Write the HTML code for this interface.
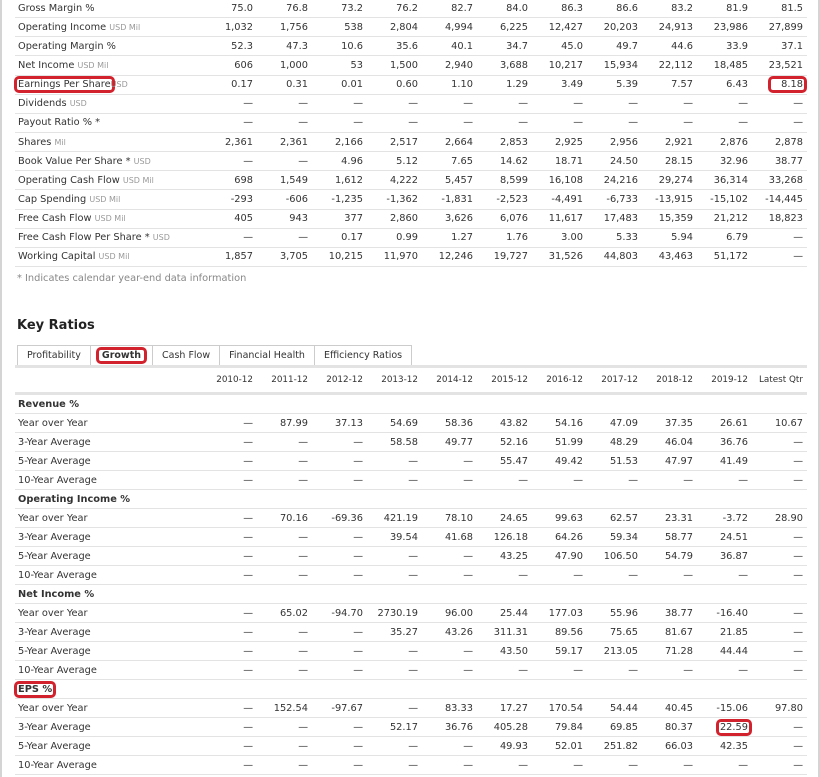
<!DOCTYPE html>
<html><head><meta charset="utf-8"><style>
body{margin:0;width:820px;height:777px;overflow:hidden;background:#fff;font-family:"DejaVu Sans",Verdana,sans-serif;color:#333;position:relative}
.vl{position:absolute;top:0;bottom:0;width:2px;background:#d4d4d4}
table{border-collapse:collapse;position:absolute;left:15px;table-layout:fixed;font-size:9.8px}
td{height:18px;padding:0;border-bottom:1px solid #e3e3e3;text-align:right;padding-right:4px;white-space:nowrap;overflow:visible}
.t1 td{height:18.15px}
td:first-child{text-align:left;padding-left:3px;padding-right:0}
col.l{width:187px}col.n{width:55px}
.u{color:#999;font-size:8px}
.b td:first-child{font-weight:bold}
.hd td{height:24px;border-top:3px solid #e3e3e3;border-bottom:3px solid #e3e3e3;font-size:8.8px}
.red{border:3px solid #d2222d;border-radius:5px;padding:0 1px;margin:-3px -4px}
h2{position:absolute;left:17px;top:318px;margin:0;font-size:13px;font-weight:bold;color:#222}
.tabs{position:absolute;left:17px;top:345px;height:20px;display:flex;font-size:9.5px}
.tabs div{border:1px solid #ccc;border-right:none;height:19px;line-height:19px;padding:0 9px;color:#333}
.tabs div:last-child{border-right:1px solid #ccc}
.fn{position:absolute;left:17px;top:273px;font-size:9.8px;color:#888}
</style></head><body>
<div class="vl" style="left:0"></div><div class="vl" style="left:818px"></div>
<table class="t1" style="top:-1px;width:792px">
<colgroup><col class="l"><col class="n"><col class="n"><col class="n"><col class="n"><col class="n"><col class="n"><col class="n"><col class="n"><col class="n"><col class="n"><col class="n"></colgroup>
<tr><td>Gross Margin %</td><td>75.0</td><td>76.8</td><td>73.2</td><td>76.2</td><td>82.7</td><td>84.0</td><td>86.3</td><td>86.6</td><td>83.2</td><td>81.9</td><td>81.5</td></tr>
<tr><td>Operating Income <span class="u">USD Mil</span></td><td>1,032</td><td>1,756</td><td>538</td><td>2,804</td><td>4,994</td><td>6,225</td><td>12,427</td><td>20,203</td><td>24,913</td><td>23,986</td><td>27,899</td></tr>
<tr><td>Operating Margin %</td><td>52.3</td><td>47.3</td><td>10.6</td><td>35.6</td><td>40.1</td><td>34.7</td><td>45.0</td><td>49.7</td><td>44.6</td><td>33.9</td><td>37.1</td></tr>
<tr><td>Net Income <span class="u">USD Mil</span></td><td>606</td><td>1,000</td><td>53</td><td>1,500</td><td>2,940</td><td>3,688</td><td>10,217</td><td>15,934</td><td>22,112</td><td>18,485</td><td>23,521</td></tr>
<tr><td><span class="red">Earnings Per Share</span><span class="u">USD</span></td><td>0.17</td><td>0.31</td><td>0.01</td><td>0.60</td><td>1.10</td><td>1.29</td><td>3.49</td><td>5.39</td><td>7.57</td><td>6.43</td><td><span class="red" style="padding-left:10px">8.18</span></td></tr>
<tr><td>Dividends <span class="u">USD</span></td><td>—</td><td>—</td><td>—</td><td>—</td><td>—</td><td>—</td><td>—</td><td>—</td><td>—</td><td>—</td><td>—</td></tr>
<tr><td>Payout Ratio % *</td><td>—</td><td>—</td><td>—</td><td>—</td><td>—</td><td>—</td><td>—</td><td>—</td><td>—</td><td>—</td><td>—</td></tr>
<tr><td>Shares <span class="u">Mil</span></td><td>2,361</td><td>2,361</td><td>2,166</td><td>2,517</td><td>2,664</td><td>2,853</td><td>2,925</td><td>2,956</td><td>2,921</td><td>2,876</td><td>2,878</td></tr>
<tr><td>Book Value Per Share * <span class="u">USD</span></td><td>—</td><td>—</td><td>4.96</td><td>5.12</td><td>7.65</td><td>14.62</td><td>18.71</td><td>24.50</td><td>28.15</td><td>32.96</td><td>38.77</td></tr>
<tr><td>Operating Cash Flow <span class="u">USD Mil</span></td><td>698</td><td>1,549</td><td>1,612</td><td>4,222</td><td>5,457</td><td>8,599</td><td>16,108</td><td>24,216</td><td>29,274</td><td>36,314</td><td>33,268</td></tr>
<tr><td>Cap Spending <span class="u">USD Mil</span></td><td>-293</td><td>-606</td><td>-1,235</td><td>-1,362</td><td>-1,831</td><td>-2,523</td><td>-4,491</td><td>-6,733</td><td>-13,915</td><td>-15,102</td><td>-14,445</td></tr>
<tr><td>Free Cash Flow <span class="u">USD Mil</span></td><td>405</td><td>943</td><td>377</td><td>2,860</td><td>3,626</td><td>6,076</td><td>11,617</td><td>17,483</td><td>15,359</td><td>21,212</td><td>18,823</td></tr>
<tr><td>Free Cash Flow Per Share * <span class="u">USD</span></td><td>—</td><td>—</td><td>0.17</td><td>0.99</td><td>1.27</td><td>1.76</td><td>3.00</td><td>5.33</td><td>5.94</td><td>6.79</td><td>—</td></tr>
<tr><td>Working Capital <span class="u">USD Mil</span></td><td>1,857</td><td>3,705</td><td>10,215</td><td>11,970</td><td>12,246</td><td>19,727</td><td>31,526</td><td>44,803</td><td>43,463</td><td>51,172</td><td>—</td></tr>
</table>
<div class="fn">* Indicates calendar year-end data information</div>
<h2>Key Ratios</h2>
<div class="tabs"><div>Profitability</div><div style="font-weight:bold;padding:0 5px"><span class="red" style="margin:0;padding:0 3px">Growth</span></div><div>Cash Flow</div><div>Financial Health</div><div>Efficiency Ratios</div></div>
<table style="top:365px;width:792px">
<colgroup><col class="l"><col class="n"><col class="n"><col class="n"><col class="n"><col class="n"><col class="n"><col class="n"><col class="n"><col class="n"><col class="n"><col class="n"></colgroup>
<tr class="hd"><td></td><td>2010-12</td><td>2011-12</td><td>2012-12</td><td>2013-12</td><td>2014-12</td><td>2015-12</td><td>2016-12</td><td>2017-12</td><td>2018-12</td><td>2019-12</td><td>Latest Qtr</td></tr>
<tr class="b"><td>Revenue %</td><td colspan="11"></td></tr>
<tr><td>Year over Year</td><td>—</td><td>87.99</td><td>37.13</td><td>54.69</td><td>58.36</td><td>43.82</td><td>54.16</td><td>47.09</td><td>37.35</td><td>26.61</td><td>10.67</td></tr>
<tr><td>3-Year Average</td><td>—</td><td>—</td><td>—</td><td>58.58</td><td>49.77</td><td>52.16</td><td>51.99</td><td>48.29</td><td>46.04</td><td>36.76</td><td>—</td></tr>
<tr><td>5-Year Average</td><td>—</td><td>—</td><td>—</td><td>—</td><td>—</td><td>55.47</td><td>49.42</td><td>51.53</td><td>47.97</td><td>41.49</td><td>—</td></tr>
<tr><td>10-Year Average</td><td>—</td><td>—</td><td>—</td><td>—</td><td>—</td><td>—</td><td>—</td><td>—</td><td>—</td><td>—</td><td>—</td></tr>
<tr class="b"><td>Operating Income %</td><td colspan="11"></td></tr>
<tr><td>Year over Year</td><td>—</td><td>70.16</td><td>-69.36</td><td>421.19</td><td>78.10</td><td>24.65</td><td>99.63</td><td>62.57</td><td>23.31</td><td>-3.72</td><td>28.90</td></tr>
<tr><td>3-Year Average</td><td>—</td><td>—</td><td>—</td><td>39.54</td><td>41.68</td><td>126.18</td><td>64.26</td><td>59.34</td><td>58.77</td><td>24.51</td><td>—</td></tr>
<tr><td>5-Year Average</td><td>—</td><td>—</td><td>—</td><td>—</td><td>—</td><td>43.25</td><td>47.90</td><td>106.50</td><td>54.79</td><td>36.87</td><td>—</td></tr>
<tr><td>10-Year Average</td><td>—</td><td>—</td><td>—</td><td>—</td><td>—</td><td>—</td><td>—</td><td>—</td><td>—</td><td>—</td><td>—</td></tr>
<tr class="b"><td>Net Income %</td><td colspan="11"></td></tr>
<tr><td>Year over Year</td><td>—</td><td>65.02</td><td>-94.70</td><td>2730.19</td><td>96.00</td><td>25.44</td><td>177.03</td><td>55.96</td><td>38.77</td><td>-16.40</td><td>—</td></tr>
<tr><td>3-Year Average</td><td>—</td><td>—</td><td>—</td><td>35.27</td><td>43.26</td><td>311.31</td><td>89.56</td><td>75.65</td><td>81.67</td><td>21.85</td><td>—</td></tr>
<tr><td>5-Year Average</td><td>—</td><td>—</td><td>—</td><td>—</td><td>—</td><td>43.50</td><td>59.17</td><td>213.05</td><td>71.28</td><td>44.44</td><td>—</td></tr>
<tr><td>10-Year Average</td><td>—</td><td>—</td><td>—</td><td>—</td><td>—</td><td>—</td><td>—</td><td>—</td><td>—</td><td>—</td><td>—</td></tr>
<tr class="b"><td><span class="red" style="margin:0 0 0 -4px">EPS %</span></td><td colspan="11"></td></tr>
<tr><td>Year over Year</td><td>—</td><td>152.54</td><td>-97.67</td><td>—</td><td>83.33</td><td>17.27</td><td>170.54</td><td>54.44</td><td>40.45</td><td>-15.06</td><td>97.80</td></tr>
<tr><td>3-Year Average</td><td>—</td><td>—</td><td>—</td><td>52.17</td><td>36.76</td><td>405.28</td><td>79.84</td><td>69.85</td><td>80.37</td><td><span class="red">22.59</span></td><td>—</td></tr>
<tr><td>5-Year Average</td><td>—</td><td>—</td><td>—</td><td>—</td><td>—</td><td>49.93</td><td>52.01</td><td>251.82</td><td>66.03</td><td>42.35</td><td>—</td></tr>
<tr><td>10-Year Average</td><td>—</td><td>—</td><td>—</td><td>—</td><td>—</td><td>—</td><td>—</td><td>—</td><td>—</td><td>—</td><td>—</td></tr>
</table>
</body></html>
